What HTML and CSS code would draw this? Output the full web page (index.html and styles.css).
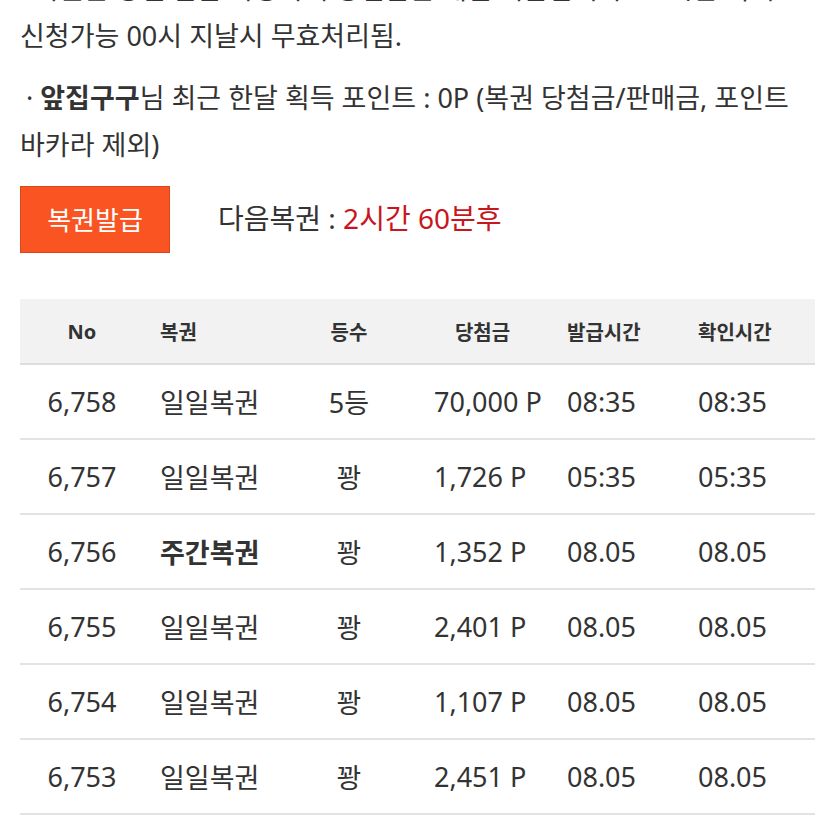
FILE: index.html
```html
<!DOCTYPE html>
<html lang="ko">
<head>
<meta charset="utf-8">
<link rel="stylesheet" href="styles.css">
</head>
<body>
<div class="page">
  <p class="notice cut">· 복권은 당일 발급 가능하며 당첨금은 매일 지급됩니다. 24시간 이내</p>
  <p class="notice first">신청가능 00시 지날시 무효처리됨.</p>
  <p class="notice second"><span class="dot">·</span> <b>앞집구구</b>님 최근 한달 획득 포인트 : 0P (복권 당첨금/판매금, 포인트 바카라 제외)</p>

  <div class="issue-row">
    <button class="issue-btn">복권발급</button>
    <span class="next">다음복권 : <span class="next-time">2시간 60분후</span></span>
  </div>

  <div class="table">
    <div class="row head">
      <div class="c c1">No</div>
      <div class="c c2">복권</div>
      <div class="c c3">등수</div>
      <div class="c c4">당첨금</div>
      <div class="c c5">발급시간</div>
      <div class="c c6">확인시간</div>
    </div>
    <div class="row">
      <div class="c c1">6,758</div><div class="c c2">일일복권</div><div class="c c3">5등</div><div class="c c4">70,000 P</div><div class="c c5">08:35</div><div class="c c6">08:35</div>
    </div>
    <div class="row">
      <div class="c c1">6,757</div><div class="c c2">일일복권</div><div class="c c3">꽝</div><div class="c c4">1,726 P</div><div class="c c5">05:35</div><div class="c c6">05:35</div>
    </div>
    <div class="row">
      <div class="c c1">6,756</div><div class="c c2 strong">주간복권</div><div class="c c3">꽝</div><div class="c c4">1,352 P</div><div class="c c5">08.05</div><div class="c c6">08.05</div>
    </div>
    <div class="row">
      <div class="c c1">6,755</div><div class="c c2">일일복권</div><div class="c c3">꽝</div><div class="c c4">2,401 P</div><div class="c c5">08.05</div><div class="c c6">08.05</div>
    </div>
    <div class="row">
      <div class="c c1">6,754</div><div class="c c2">일일복권</div><div class="c c3">꽝</div><div class="c c4">1,107 P</div><div class="c c5">08.05</div><div class="c c6">08.05</div>
    </div>
    <div class="row">
      <div class="c c1">6,753</div><div class="c c2">일일복권</div><div class="c c3">꽝</div><div class="c c4">2,451 P</div><div class="c c5">08.05</div><div class="c c6">08.05</div>
    </div>
  </div>
</div>
</body>
</html>
```
FILE: styles.css
```css
html, body {
  margin: 0;
  padding: 0;
  background: #ffffff;
  overflow: hidden;
}
body {
  font-family: "Noto Sans", "Noto Sans CJK KR", sans-serif;
  color: #333333;
  font-size: 27px;
}
.page {
  padding: 0 20px;
  margin-top: -35px;
}
.notice {
  margin: 0;
  line-height: 47px;
  white-space: nowrap;
}
.notice.second {
  white-space: normal;
  margin-top: 15px;
}
.dot {
  padding-left: 6px;
}
.notice b {
  font-weight: 700;
}
.issue-row {
  display: flex;
  align-items: center;
  margin-top: 18px;
  gap: 48px;
}
.issue-btn {
  width: 150px;
  height: 67px;
  background: #f95421;
  border: 1px solid #d8461b;
  color: #ffffff;
  font-family: "Noto Sans", "Noto Sans CJK KR", sans-serif;
  font-size: 26px;
  padding: 0 0 2px 0;
  margin: 0;
}
.next {
  font-size: 28px;
  margin-top: -6px;
}
.next-time {
  color: #c8161d;
}
.table {
  margin-top: 46px;
  width: 795px;
}
.row {
  display: grid;
  grid-template-columns: 124px 140px 130px 137px 131px 133px;
  height: 73px;
  align-items: center;
  border-bottom: 2px solid #e3e3e3;
}
.row.head {
  background: #f2f2f2;
  height: 64px;
  font-size: 20px;
  font-weight: 700;
  border-bottom: 2px solid #dedede;
}
.c {
  white-space: nowrap;
}
.c1, .c3 {
  text-align: center;
}
.c2, .c5, .c6 {
  padding-left: 16px;
}
.c4 {
  padding-left: 20px;
}
.head .c4 {
  padding-left: 0;
  text-align: center;
}
.strong {
  font-weight: 700;
}
```
